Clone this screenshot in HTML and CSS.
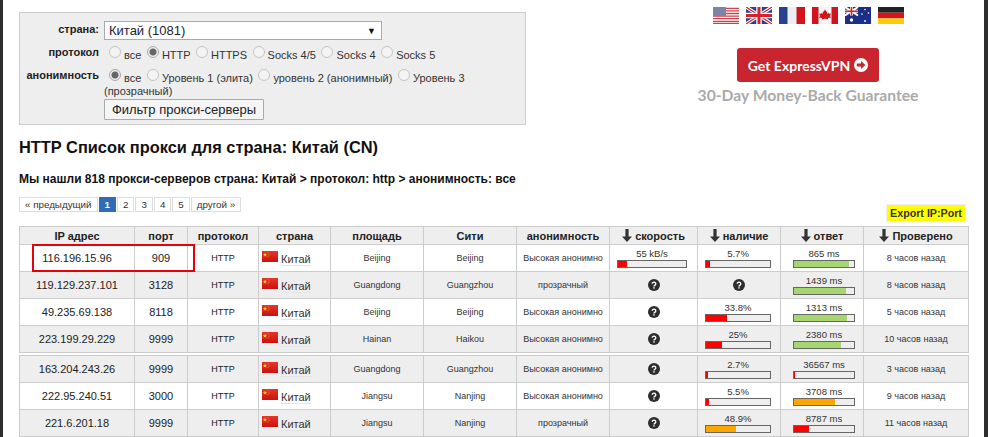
FILE: index.html
```html
<!DOCTYPE html>
<html lang="ru">
<head>
<meta charset="utf-8">
<title>HTTP Список прокси</title>
<link rel="stylesheet" href="styles.css">
</head>
<body>
<svg class="defs" width="0" height="0" aria-hidden="true">
  <defs>
    <linearGradient id="cnfill" x1="0" y1="0" x2="0" y2="1">
      <stop offset="0" stop-color="#e8352a"/><stop offset="1" stop-color="#c9130f"/>
    </linearGradient>
    <symbol id="cn" viewBox="0 0 16 11">
      <rect width="16" height="11" fill="url(#cnfill)"/>
      <path d="M3 1.500l.6 1.600 1.600 0-1.300 1 .5 1.600-1.400-1-1.400 1 .5-1.600-1.300-1 1.600 0z" fill="#f7d01c"/>
      <circle cx="6" cy="1.600" r=".45" fill="#f7d01c"/><circle cx="7" cy="3" r=".45" fill="#f7d01c"/>
      <circle cx="7" cy="4.600" r=".45" fill="#f7d01c"/><circle cx="6" cy="5.800" r=".45" fill="#f7d01c"/>
    </symbol>
    <symbol id="q" viewBox="0 0 12 12">
      <circle cx="6" cy="6" r="6" fill="#2d2d2d"/>
      <path d="M4.200 4.700a1.800 1.600 0 1 1 2.800 1.400c-.7.4-1 .7-1 1.300" fill="none" stroke="#fff" stroke-width="1.300"/>
      <rect x="5.300" y="8.200" width="1.400" height="1.400" fill="#fff"/>
    </symbol>
    <symbol id="arrow" viewBox="0 0 10 13">
      <path d="M3.400 0h3.200v7.500H10L5 13 0 7.500h3.400z" fill="#333"/>
    </symbol>
  </defs>
</svg>
<div class="edge"></div>
<main class="page">
  <div class="top">
    <form class="filter">
      <div class="frow">
        <span class="flabel first">страна:</span>
        <div class="fvalue"><div class="select"><span>Китай (1081)</span><i class="caret">▼</i></div></div>
      </div>
      <div class="frow">
        <span class="flabel">протокол</span>
        <div class="fvalue radios">
          <span class="radio"></span>все <span class="radio on"></span>HTTP <span class="radio"></span>HTTPS <span class="radio"></span>Socks 4/5 <span class="radio"></span>Socks 4 <span class="radio"></span>Socks 5
        </div>
      </div>
      <div class="frow">
        <span class="flabel">анонимность</span>
        <div class="fvalue radios wrapped">
          <span class="radio on"></span><span>все</span> <span class="radio"></span><span>Уровень 1 (элита)</span> <span class="radio"></span><span>уровень 2 (анонимный)</span> <span class="radio"></span><span>Уровень 3</span> <span>(прозрачный)</span>
        </div>
      </div>
      <div class="frow">
        <span class="flabel"></span>
        <div class="fvalue"><button type="button" class="fbtn">Фильтр прокси-серверы</button></div>
      </div>
    </form>
    <aside class="promo">
      <div class="flags">
        <svg viewBox="0 0 26 17" class="flag"><rect width="26" height="17" fill="#fff"/><path d="M0 1.300h26M0 3.900h26M0 6.500h26M0 9.100h26M0 11.700h26M0 14.300h26M0 16.500h26" stroke="#c8434e" stroke-width="1.300"/><rect width="13" height="9" fill="#7c84a8"/></svg>
        <svg viewBox="0 0 26 17" class="flag"><rect width="26" height="17" fill="#27408f"/><path d="M0 0l26 17M26 0L0 17" stroke="#fff" stroke-width="3.500"/><path d="M0 0l26 17M26 0L0 17" stroke="#d2232f" stroke-width="1.200"/><path d="M13 0v17M0 8.500h26" stroke="#fff" stroke-width="5.500"/><path d="M13 0v17M0 8.500h26" stroke="#d2232f" stroke-width="3"/></svg>
        <svg viewBox="0 0 26 17" class="flag"><rect width="26" height="17" fill="#eceef2"/><rect width="8.500" height="17" fill="#27408f"/><rect x="17.500" width="8.500" height="17" fill="#d2121d"/></svg>
        <svg viewBox="0 0 26 17" class="flag"><rect width="26" height="17" fill="#f4f4f4"/><rect width="6.500" height="17" fill="#d2121d"/><rect x="19.500" width="6.500" height="17" fill="#d2121d"/><path d="M13 2.500l1.300 2.300 1-.5-.4 2.700 1.500-1.300.5 1 2-.3-.7 2-.7.500 2 1.500-3.500.5.100 1.300-3-.4h-.2l-3 .4.100-1.300-3.500-.5 2-1.500-.7-.5-.7-2 2 .3.500-1 1.500 1.300-.4-2.700 1 .5z" fill="#d2121d"/></svg>
        <svg viewBox="0 0 26 17" class="flag"><rect width="26" height="17" fill="#1c2f86"/><path d="M0 0l13 8.500M13 0L0 8.500" stroke="#fff" stroke-width="2"/><path d="M6.500 0v8.500M0 4.250h13" stroke="#fff" stroke-width="3"/><path d="M6.500 0v8.500M0 4.250h13" stroke="#d2232f" stroke-width="1.600"/><circle cx="6.500" cy="13" r="1.700" fill="#fff"/><circle cx="20" cy="2.500" r=".8" fill="#fff"/><circle cx="23.500" cy="6" r=".8" fill="#fff"/><circle cx="17" cy="7" r=".8" fill="#fff"/><circle cx="20" cy="14" r=".9" fill="#fff"/></svg>
        <svg viewBox="0 0 26 17" class="flag"><rect width="26" height="5.700" fill="#222"/><rect y="5.700" width="26" height="5.700" fill="#d8121c"/><rect y="11.400" width="26" height="5.600" fill="#fbcd05"/></svg>
      </div>
      <a class="vpn">Get ExpressVPN
        <svg viewBox="0 0 14 14" class="vpn-ico"><circle cx="7" cy="7" r="7" fill="#fff"/><path d="M2.800 5.600h4.200V2.900L11.400 7 7 11.100V8.400H2.800z" fill="#c8252e"/></svg>
      </a>
      <div class="guarantee">30-Day Money-Back Guarantee</div>
    </aside>
  </div>

  <h1 class="title">HTTP Список прокси для страна: Китай (CN)</h1>
  <h2 class="found">Мы нашли 818 прокси-серверов страна: Китай &gt; протокол: http &gt; анонимность: все</h2>

  <div class="tools">
    <nav class="pager">
      <a>« предыдущий</a><a class="cur">1</a><a>2</a><a>3</a><a>4</a><a>5</a><a>другой »</a>
    </nav>
    <a class="export">Export IP:Port</a>
  </div>

  <div class="tablewrap">
    <table class="list">
      <colgroup>
        <col class="c-ip"><col class="c-port"><col class="c-proto"><col class="c-country"><col class="c-area"><col class="c-city"><col class="c-anon"><col class="c-speed"><col class="c-avail"><col class="c-resp"><col class="c-check">
      </colgroup>
      <thead>
        <tr>
          <th>IP адрес</th><th>порт</th><th>протокол</th><th>страна</th><th>площадь</th><th>Сити</th><th>анонимность</th>
          <th><svg class="arr"><use href="#arrow"/></svg> скорость</th>
          <th><svg class="arr"><use href="#arrow"/></svg> наличие</th>
          <th><svg class="arr"><use href="#arrow"/></svg> ответ</th>
          <th><svg class="arr"><use href="#arrow"/></svg> Проверено</th>
        </tr>
      </thead>
      <tbody>
        <tr>
          <td class="big">116.196.15.96</td><td class="big">909</td><td class="mid">HTTP</td>
          <td class="cty"><svg class="cn"><use href="#cn"/></svg><span>Китай</span></td>
          <td>Beijing</td><td>Beijing</td><td>Высокая анонимно</td>
          <td><div class="meter speed"><b>55 kB/s</b><div class="track"><i class="red" style="width:13%"></i></div></div></td>
          <td><div class="meter avail"><b>5.7%</b><div class="track"><i class="red" style="width:6%"></i></div></div></td>
          <td><div class="meter resp"><b>865 ms</b><div class="track"><i class="green" style="width:91%"></i></div></div></td>
          <td>8 часов назад</td>
        </tr>
        <tr>
          <td class="big">119.129.237.101</td><td class="big">3128</td><td class="mid">HTTP</td>
          <td class="cty"><svg class="cn"><use href="#cn"/></svg><span>Китай</span></td>
          <td>Guangdong</td><td>Guangzhou</td><td>прозрачный</td>
          <td><svg class="q"><use href="#q"/></svg></td>
          <td><svg class="q"><use href="#q"/></svg></td>
          <td><div class="meter resp"><b>1439 ms</b><div class="track"><i class="green" style="width:86%"></i></div></div></td>
          <td>8 часов назад</td>
        </tr>
        <tr>
          <td class="big">49.235.69.138</td><td class="big">8118</td><td class="mid">HTTP</td>
          <td class="cty"><svg class="cn"><use href="#cn"/></svg><span>Китай</span></td>
          <td>Beijing</td><td>Beijing</td><td>Высокая анонимно</td>
          <td><svg class="q"><use href="#q"/></svg></td>
          <td><div class="meter avail"><b>33.8%</b><div class="track"><i class="red" style="width:33%"></i></div></div></td>
          <td><div class="meter resp"><b>1313 ms</b><div class="track"><i class="green" style="width:88%"></i></div></div></td>
          <td>5 часов назад</td>
        </tr>
        <tr>
          <td class="big">223.199.29.229</td><td class="big">9999</td><td class="mid">HTTP</td>
          <td class="cty"><svg class="cn"><use href="#cn"/></svg><span>Китай</span></td>
          <td>Hainan</td><td>Haikou</td><td>Высокая анонимно</td>
          <td><svg class="q"><use href="#q"/></svg></td>
          <td><div class="meter avail"><b>25%</b><div class="track"><i class="red" style="width:25%"></i></div></div></td>
          <td><div class="meter resp"><b>2380 ms</b><div class="track"><i class="green" style="width:79%"></i></div></div></td>
          <td>10 часов назад</td>
        </tr>
        <tr class="spacer"><td colspan="11"></td></tr>
        <tr>
          <td class="big">163.204.243.26</td><td class="big">9999</td><td class="mid">HTTP</td>
          <td class="cty"><svg class="cn"><use href="#cn"/></svg><span>Китай</span></td>
          <td>Guangdong</td><td>Guangzhou</td><td>Высокая анонимно</td>
          <td><svg class="q"><use href="#q"/></svg></td>
          <td><div class="meter avail"><b>2.7%</b><div class="track"><i class="red" style="width:3%"></i></div></div></td>
          <td><div class="meter resp"><b>36567 ms</b><div class="track"><i class="red" style="width:2%"></i></div></div></td>
          <td>3 часов назад</td>
        </tr>
        <tr>
          <td class="big">222.95.240.51</td><td class="big">3000</td><td class="mid">HTTP</td>
          <td class="cty"><svg class="cn"><use href="#cn"/></svg><span>Китай</span></td>
          <td>Jiangsu</td><td>Nanjing</td><td>Высокая анонимно</td>
          <td><svg class="q"><use href="#q"/></svg></td>
          <td><div class="meter avail"><b>5.5%</b><div class="track"><i class="red" style="width:5%"></i></div></div></td>
          <td><div class="meter resp"><b>3708 ms</b><div class="track"><i class="orange" style="width:68%"></i></div></div></td>
          <td>9 часов назад</td>
        </tr>
        <tr>
          <td class="big">221.6.201.18</td><td class="big">9999</td><td class="mid">HTTP</td>
          <td class="cty"><svg class="cn"><use href="#cn"/></svg><span>Китай</span></td>
          <td>Jiangsu</td><td>Nanjing</td><td>прозрачный</td>
          <td><svg class="q"><use href="#q"/></svg></td>
          <td><div class="meter avail"><b>48.9%</b><div class="track"><i class="orange" style="width:47%"></i></div></div></td>
          <td><div class="meter resp"><b>8787 ms</b><div class="track"><i class="red" style="width:25%"></i></div></div></td>
          <td>11 часов назад</td>
        </tr>
      </tbody>
    </table>
    <div class="highlight"></div>
  </div>
</main>
<div class="edge right"></div>
</body>
</html>
```

FILE: styles.css
```css
* { box-sizing: border-box; }
html, body { margin: 0; height: 437px; overflow: hidden; }
body {
  display: flex;
  background: #fff;
  color: #222;
  font-family: "Liberation Sans", Arial, sans-serif;
  font-size: 12px;
}
.defs { position: absolute; }
.edge { width: 3px; flex: none; background: #2e2e2e; }
.edge.right { width: 4px; }
.page { flex: 1; min-width: 0; padding: 12px 16px 0 16px; }

.top { display: flex; height: 113px; }
.filter {
  width: 507px;
  height: 113px;
  background: #eee;
  border: 1px solid #ccc;
  padding: 8px 0 0;
  flex: none;
}
.frow { display: flex; }
.flabel {
  width: 79px;
  flex: none;
  text-align: right;
  font-weight: bold;
  font-size: 11px;
  line-height: 14px;
  color: #222;
}
.flabel.first { padding-top: 1px; }
.fvalue { margin-left: 5px; flex: 1; min-width: 0; }
.select {
  width: 278px;
  height: 19px;
  background: #fff;
  border: 1px solid #aaa;
  display: flex;
  justify-content: space-between;
  align-items: center;
  padding: 0 5px 0 4px;
  font-size: 13px;
  color: #223;
  margin-bottom: 5px;
}
.caret { font-style: normal; font-size: 9px; color: #111; }
.radios { font-size: 11px; line-height: 13px; color: #333; height: 23px; padding-top: 2px; }
.wrapped { height: 31px; width: 398px; flex: none; }
.radio {
  display: inline-block;
  width: 12px;
  height: 12px;
  border-radius: 50%;
  background: #f4f4f4;
  border: 1px solid #c4c4c4;
  margin: -1px 3px -1px 2.500px;
  vertical-align: 2px;
}
.radios > .radio:first-child { margin-left: 5px; }
.radio.on { background: radial-gradient(circle, #666 0 3px, #ededed 4px); border-color: #aaa; }
.fbtn {
  display: block;
  width: 160px;
  height: 21px;
  padding: 0;
  background: #f5f5f5;
  border: 1px solid #aaa;
  border-radius: 1px;
  font: 13px "Liberation Sans", Arial, sans-serif;
  color: #222;
}

.promo { flex: 1; display: flex; flex-direction: column; align-items: center; padding-left: 122px; }
.flags { display: flex; gap: 7px; margin-top: -5px; }
.flag { width: 26px; height: 17px; display: block; }
.vpn {
  margin-top: 24px;
  width: 142px;
  height: 34px;
  border-radius: 3px;
  background: #c8252e;
  color: #fff;
  font: bold 14px "Lato", sans-serif;
  display: flex;
  align-items: center;
  justify-content: center;
  gap: 4px;
}
.vpn-ico { width: 14px; height: 14px; }
.guarantee { margin-top: 4px; font: bold 15.700px "Lato", sans-serif; color: #aaa; white-space: nowrap; }

.title { margin: 12px 0 0; font-size: 16.400px; line-height: 20px; color: #111; font-weight: bold; }
.found { margin: 14px 0 0; font-size: 12px; line-height: 16px; color: #111; font-weight: bold; }

.tools { display: flex; justify-content: space-between; align-items: flex-start; margin-top: 10px; height: 29px; }
.pager { display: flex; gap: 1px; }
.pager a {
  height: 15px;
  line-height: 13px;
  border: 1px solid #ddd;
  padding: 0 5px;
  font-size: 9.800px;
  background: #fff;
  color: #333;
  min-width: 17px;
  text-align: center;
}
.pager a.cur { background: #2f6cb5; border-color: #2f6cb5; color: #fff; font-weight: bold; }
.export {
  margin: 7px 2px 0 0;
  background: #ff0;
  border: 1px solid #eee;
  font-size: 10.700px;
  font-weight: bold;
  line-height: 16px;
  color: #333;
  height: 18px;
  width: 80px;
  text-align: center;
  white-space: nowrap;
}

.tablewrap { position: relative; }
.list { width: 949px; border-collapse: collapse; table-layout: fixed; }
.c-ip { width: 115px; } .c-port { width: 53px; } .c-proto { width: 71px; } .c-country { width: 72px; }
.c-area { width: 93px; } .c-city { width: 93px; } .c-anon { width: 93px; } .c-speed { width: 88px; }
.c-avail { width: 83px; } .c-resp { width: 83px; } .c-check { width: 105px; }
.list th, .list td { border: 1px solid #ccc; padding: 0; text-align: center; overflow: hidden; white-space: nowrap; }
.list th { height: 18px; background: #eee; font-size: 11px; color: #222; }
.list td { height: 27px; font-size: 9px; color: #333; }
.list tbody tr:nth-child(even) td { background: #eee; }
.list tbody tr:nth-child(5) td, .list tbody tr:nth-child(7) td { background: #fff; }
.list tbody tr:nth-child(6) td, .list tbody tr:nth-child(8) td { background: #eee; }
.list td.big { font-size: 11px; color: #222; }
.list td.mid { font-size: 9px; color: #222; }
.list .spacer td { height: 3px; border-left: 0; border-right: 0; }
.arr { width: 10px; height: 13px; vertical-align: -2px; }
.list td.cty { text-align: left; padding-left: 3px; font-size: 11px; }
.cty span { border-bottom: 1px solid #e4e4e4; margin-left: 3px; }
.cn { width: 16px; height: 11px; vertical-align: 1px; }
.q { width: 12px; height: 12px; display: block; margin: 0 auto; }
.meter b { display: block; font-weight: normal; font-size: 9.500px; line-height: 12px; color: #333; }
.meter.speed { width: 70px; margin-left: 7px; }
.meter.avail { width: 66px; margin-left: 7px; }
.meter.resp { width: 62px; margin-left: 12px; }
.track { height: 8px; border: 1px solid #666; background: #eee; }
.track i { display: block; height: 100%; }
.red { background: #f00; }
.green { background: #a5d66f; }
.orange { background: #ffa500; }
.highlight { position: absolute; left: 13px; top: 18px; width: 163px; height: 28px; border: 2px solid #e8000b; pointer-events: none; }
```
